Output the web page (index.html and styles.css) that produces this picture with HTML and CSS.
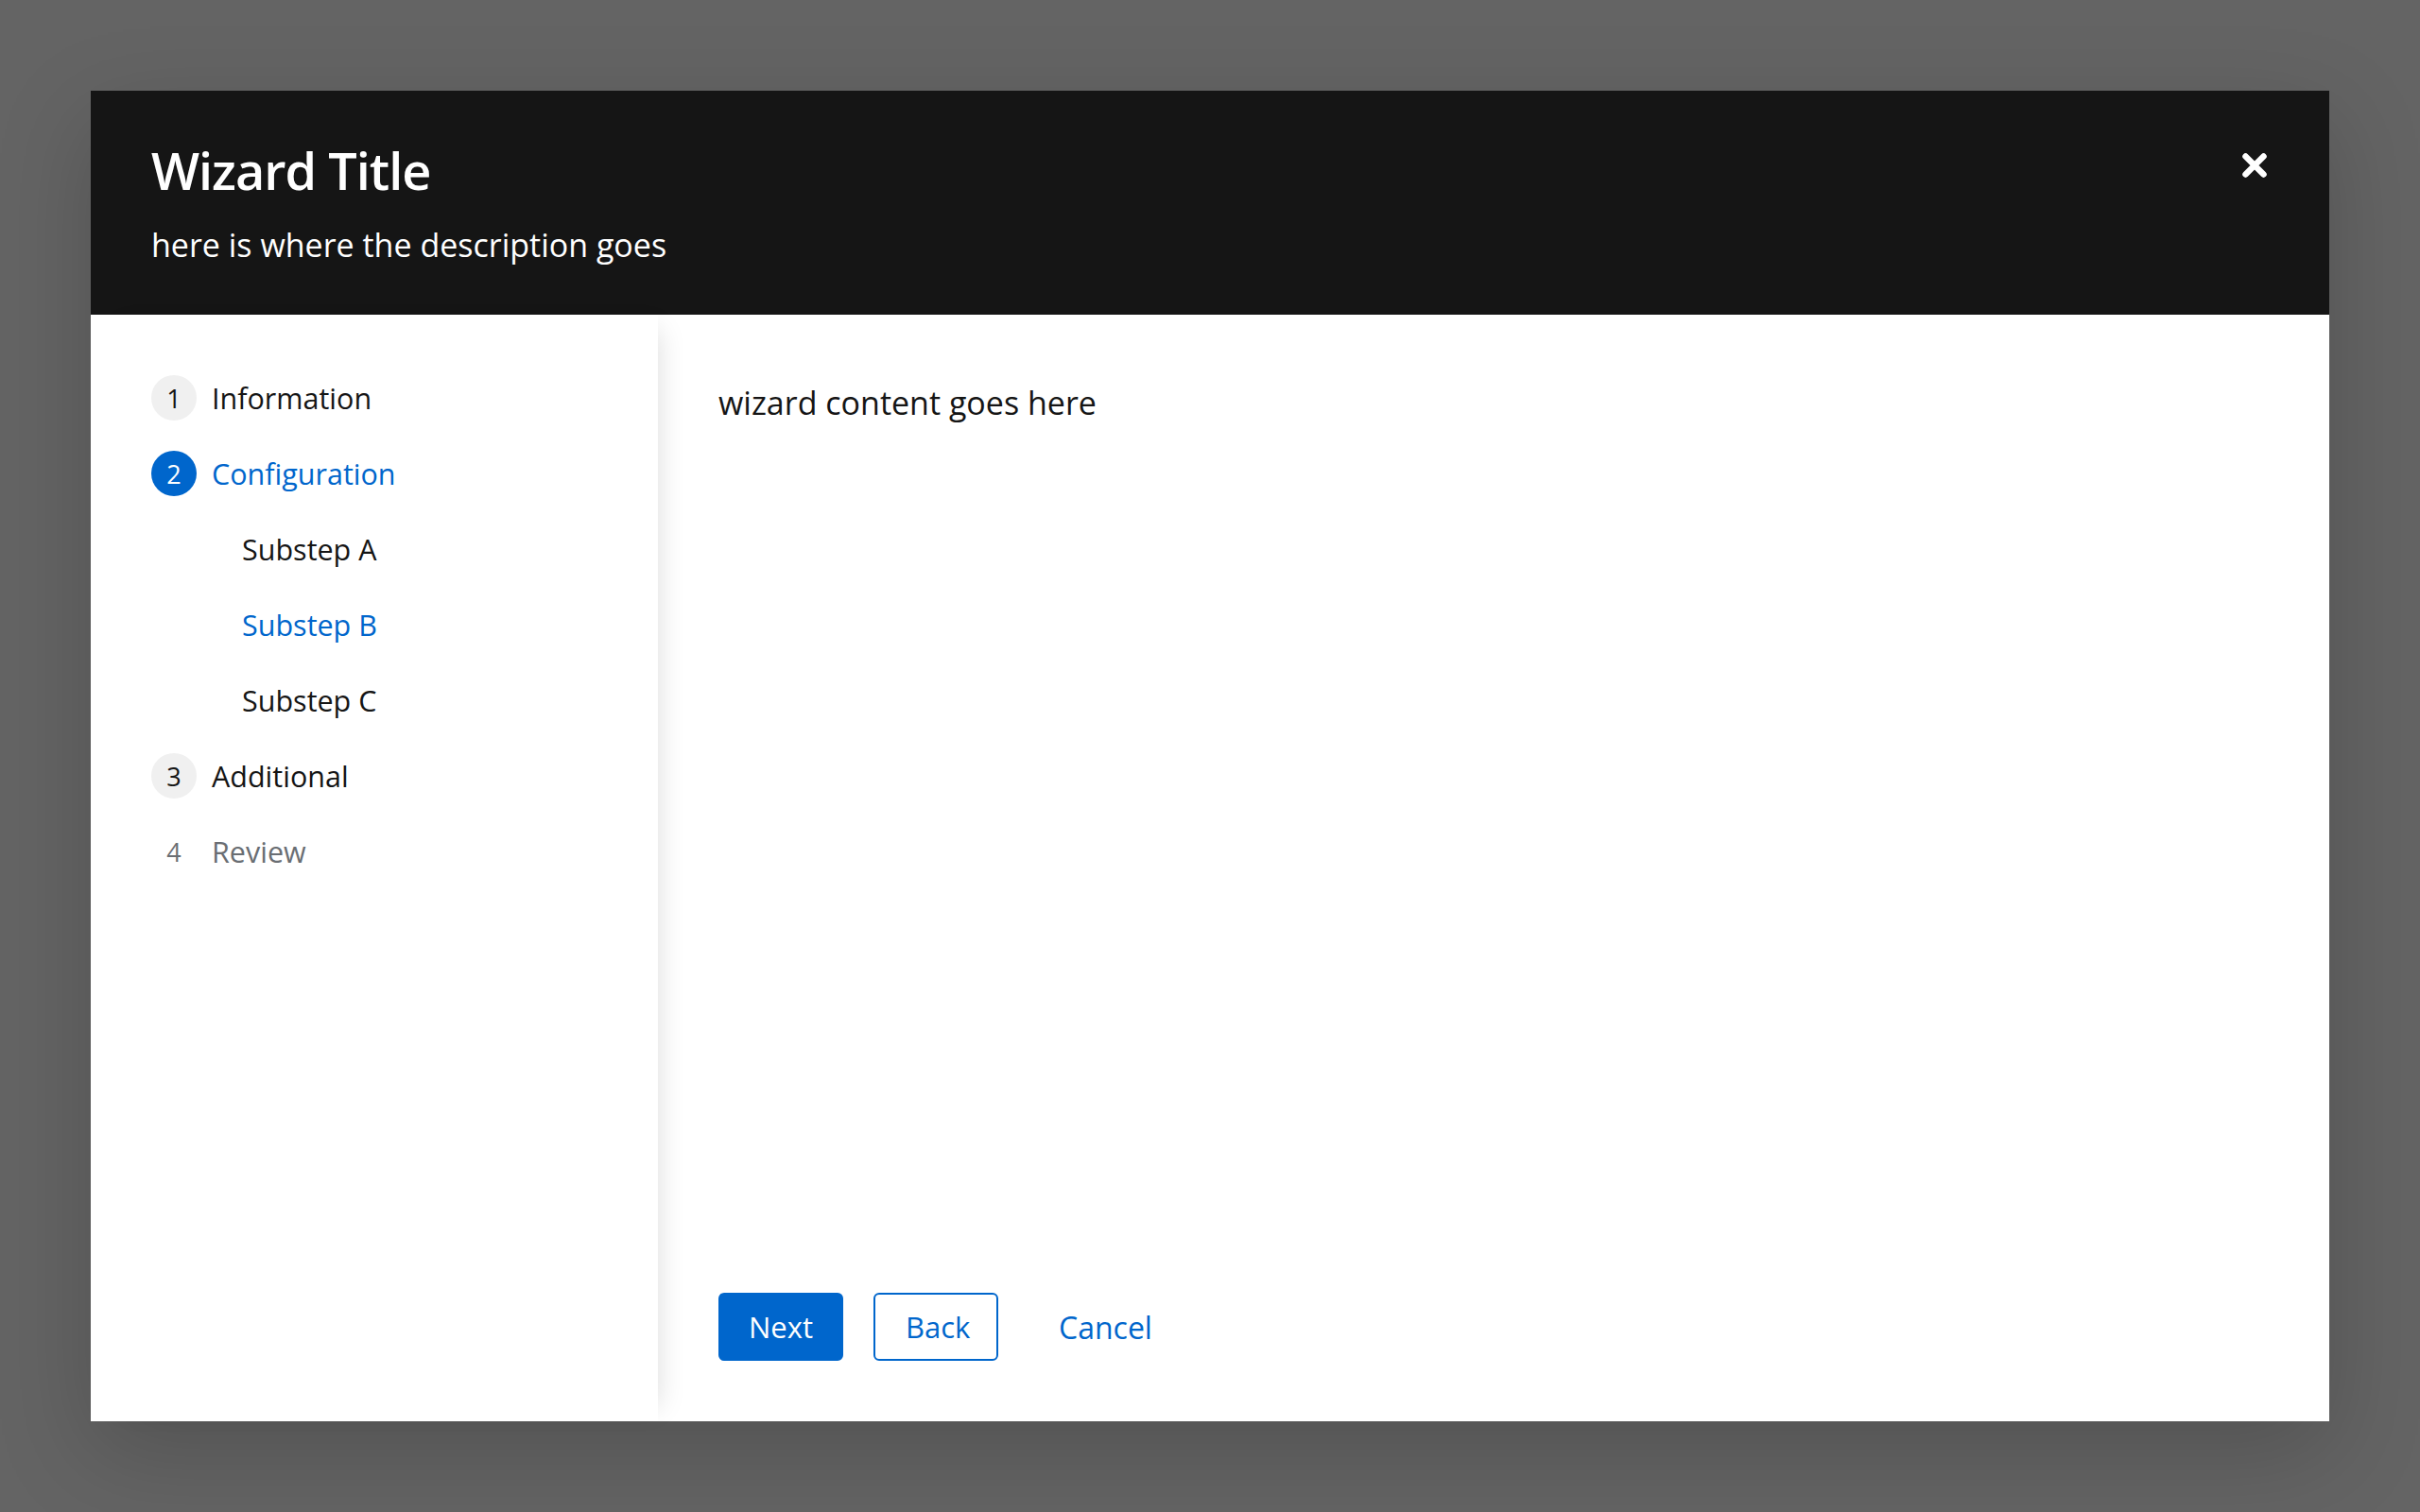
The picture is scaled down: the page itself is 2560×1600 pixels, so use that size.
FILE: index.html
```html
<!DOCTYPE html>
<html lang="en">
<head>
<meta charset="utf-8">
<title>Wizard</title>
<link rel="stylesheet" href="styles.css">
</head>
<body>
<div class="backdrop">
  <div class="wizard">
    <header class="wizard-header">
      <div class="header-text">
        <h1 class="wizard-title">Wizard Title</h1>
        <p class="wizard-desc">here is where the description goes</p>
      </div>
      <button class="close-btn" aria-label="Close">
        <svg width="28" height="28" viewBox="0 0 28 28"><path d="M4.5 4.5 L23.5 23.5 M23.5 4.5 L4.5 23.5" stroke="#fff" stroke-width="6.5" stroke-linecap="round" fill="none"/></svg>
      </button>
    </header>
    <div class="wizard-body">
      <nav class="wizard-nav">
        <ol class="nav-list">
          <li class="nav-item"><span class="step-num">1</span><span class="step-label">Information</span></li>
          <li class="nav-item current"><span class="step-num">2</span><span class="step-label">Configuration</span></li>
          <li class="nav-item sub"><span class="step-label">Substep A</span></li>
          <li class="nav-item sub current"><span class="step-label">Substep B</span></li>
          <li class="nav-item sub"><span class="step-label">Substep C</span></li>
          <li class="nav-item"><span class="step-num">3</span><span class="step-label">Additional</span></li>
          <li class="nav-item disabled"><span class="step-num">4</span><span class="step-label">Review</span></li>
        </ol>
      </nav>
      <main class="wizard-main">
        <div class="main-content">wizard content goes here</div>
        <footer class="wizard-footer">
          <button class="btn primary">Next</button>
          <button class="btn secondary">Back</button>
          <button class="btn link">Cancel</button>
        </footer>
      </main>
    </div>
  </div>
</div>
</body>
</html>
```

FILE: styles.css
```css
* { box-sizing: border-box; }
html, body {
  margin: 0;
  padding: 0;
  background: #646464;
  font-family: "Open Sans", "Noto Sans", sans-serif;
  color: #151515;
}
.backdrop {
  width: 2560px;
  height: 1600px;
  padding: 96px;
  display: flex;
}
.wizard {
  flex: 1;
  display: flex;
  flex-direction: column;
  background: #fff;
  box-shadow: 0 32px 96px 0 rgba(3,3,3,0.18);
}
.wizard-header {
  background: #151515;
  height: 237px;
  padding: 48px 64px 0 64px;
  display: flex;
  justify-content: space-between;
  align-items: flex-start;
}
.wizard-title {
  margin: 0;
  font-family: "Open Sans", sans-serif;
  font-weight: 600;
  font-size: 54px;
  line-height: 72px;
  color: #fff;
  letter-spacing: -1px;
}
.wizard-desc {
  margin: 19px 0 0 0;
  font-size: 34px;
  line-height: 48px;
  color: #fff;
}
.close-btn {
  background: none;
  border: 0;
  padding: 0;
  margin: 17px 1px 0 0;
  width: 28px;
  height: 28px;
  display: flex;
  cursor: pointer;
}
.wizard-body {
  flex: 1;
  display: flex;
  min-height: 0;
}
.wizard-nav {
  width: 600px;
  flex: none;
  padding: 48px 0 0 64px;
  position: relative;
  z-index: 1;
  background: #fff;
  box-shadow: 16px 0 28px -16px rgba(3,3,3,0.14);
}
.nav-list {
  list-style: none;
  margin: 0;
  padding: 0;
}
.nav-item {
  height: 80px;
  display: flex;
  align-items: center;
  font-size: 30.5px;
  color: #151515;
}
.step-num {
  width: 48px;
  height: 48px;
  border-radius: 50%;
  background: #f0f0f0;
  display: flex;
  align-items: center;
  justify-content: center;
  font-size: 27px;
  margin-right: 16px;
  flex: none;
}
.nav-item.current { color: #0066cc; }
.nav-item.current .step-num { background: #0066cc; color: #fff; }
.nav-item.disabled { color: #6a6e73; }
.nav-item.disabled .step-num { background: transparent; }
.nav-item.sub { padding-left: 96px; }
.wizard-main {
  flex: 1;
  display: flex;
  flex-direction: column;
  padding: 48px 64px 64px 64px;
}
.main-content {
  flex: 1;
  font-size: 34px;
  line-height: 48px;
  padding-top: 21px;
}
.wizard-footer {
  display: flex;
  align-items: center;
  gap: 32px;
}
.btn {
  font-family: "Open Sans", "Noto Sans", sans-serif;
  font-size: 31px;
  height: 72px;
  padding: 0 32px;
  border-radius: 6px;
  border: 0;
  background: none;
  cursor: pointer;
}
.btn.primary {
  background: #0066cc;
  color: #fff;
  width: 132px;
}
.btn.secondary {
  border: 2px solid #0066cc;
  color: #0066cc;
  width: 132px;
}
.btn.link {
  color: #0066cc;
  font-size: 32px;
}
```
